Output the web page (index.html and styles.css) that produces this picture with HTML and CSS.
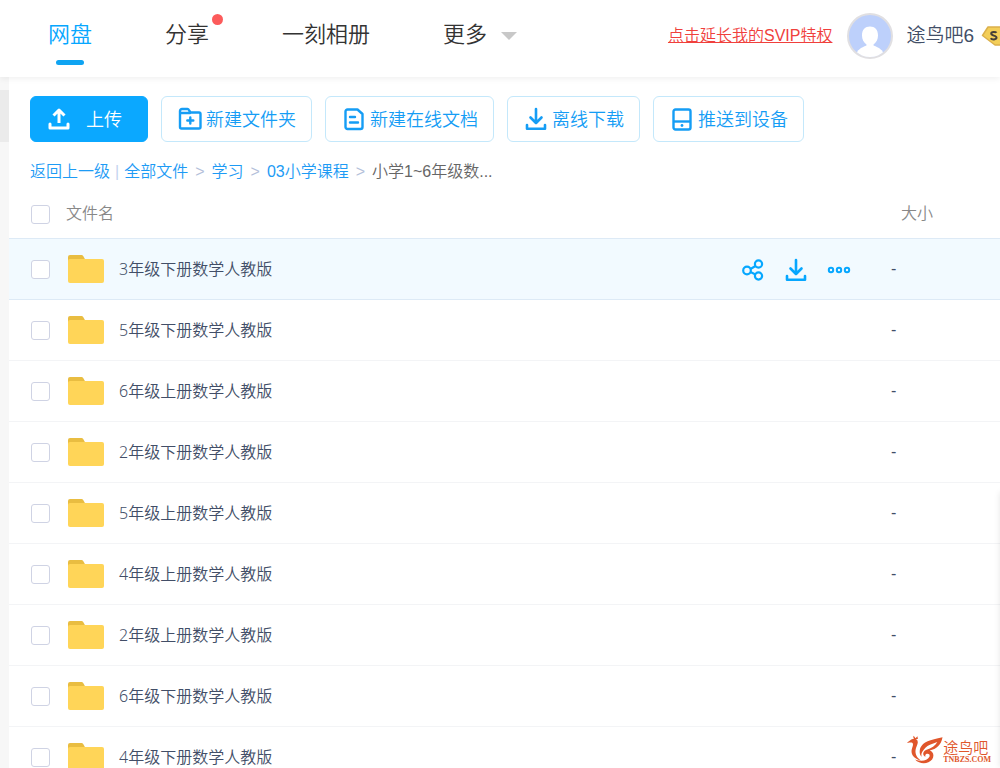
FILE: index.html
```html
<!DOCTYPE html>
<html lang="zh-CN">
<head>
<meta charset="utf-8">
<title>网盘</title>
<link rel="stylesheet" href="styles.css">
</head>
<body>
<svg class="sprite" aria-hidden="true">
  <symbol id="folder" viewBox="0 0 36 30">
    <path d="M0 12V3a2 2 0 0 1 2-2h11.500a2 2 0 0 1 1.700.9L17.500 6v6z" fill="#e9bd41"/>
    <path d="M0 6.500Q0 5 2 5h32a2 2 0 0 1 2 2v20a2 2 0 0 1-2 2H2a2 2 0 0 1-2-2z" fill="#ffd558"/>
  </symbol>
  <symbol id="download" viewBox="0 0 24 24">
    <path d="M12 2v14M6.500 10.500 12 16l5.500-5.500M3 18v3.700h18V18" fill="none" stroke="currentColor" stroke-width="2.600" stroke-linecap="round" stroke-linejoin="round"/>
  </symbol>
</svg>
<div class="app">
  <header class="header">
    <nav class="nav">
      <a class="nav-item active" href="#">网盘</a>
      <a class="nav-item" href="#">分享<span class="dot"></span></a>
      <a class="nav-item" href="#">一刻相册</a>
      <a class="nav-item more" href="#">更多<span class="caret"></span></a>
    </nav>
    <div class="user">
      <a class="svip" href="#">点击延长我的SVIP特权</a>
      <svg class="avatar" viewBox="0 0 46 46" aria-label="头像">
        <clipPath id="disc"><circle cx="23" cy="23" r="21"/></clipPath>
        <circle cx="23" cy="23" r="22" fill="#bdd0fb" stroke="#e0dfe2" stroke-width="2"/>
        <g clip-path="url(#disc)" fill="#fff">
          <path d="M15 22.500c0-6 3.200-9 8-9s8 3 8 9c0 4-1.700 7-4.500 9v2h-7v-2c-2.800-2-4.500-5-4.500-9z"/>
          <path d="M9 42c1-5 5-7.500 10.500-9.500h7C32 34.500 36 37 37 42v4H9z"/>
        </g>
      </svg>
      <span class="username">途鸟吧6</span>
      <svg class="badge" viewBox="0 0 19 24" aria-label="SVIP">
        <path d="M7 3h14v18h-7L1.500 11.500z" fill="#f3ce58" stroke="#dbb04b" stroke-width="1.500" stroke-linejoin="round"/>
        <path d="M15.500 8.800C14.800 7.700 10.200 7.200 10.200 9.600c0 2.500 5.300 1.500 5.300 4 0 2.400-4.800 2.200-5.800.7" fill="none" stroke="#463f38" stroke-width="2"/>
      </svg>
    </div>
  </header>
  <div class="body">
    <aside class="rail"><div class="rail-thumb"></div></aside>
    <main class="main">
      <div class="toolbar">
        <button class="btn primary" type="button">
          <svg class="icon" viewBox="0 0 26 26"><path d="M13 17V5M7.500 9.500 13 4l5.500 5.500" fill="none" stroke="currentColor" stroke-width="3" stroke-linejoin="round"/><path d="M4 18v4h18v-4" fill="none" stroke="currentColor" stroke-width="3" stroke-linecap="round" stroke-linejoin="round"/></svg>
          <span class="label">上传</span></button>
        <button class="btn" type="button">
          <svg class="icon" viewBox="0 0 26 26" fill="none" stroke="currentColor" stroke-width="2.400" stroke-linejoin="round" stroke-linecap="round"><path d="M3 21V5a2 2 0 0 1 2-2h5.500a1.500 1.500 0 0 1 1.300.800L13.500 6.500H22a1.500 1.500 0 0 1 1.500 1.500v13a1.500 1.500 0 0 1-1.500 1.500H4.500A1.500 1.500 0 0 1 3 21zM3 7h10M13.300 11.500v6M10.300 14.500h6"/></svg>
          <span class="label">新建文件夹</span></button>
        <button class="btn" type="button">
          <svg class="icon" viewBox="0 0 26 26" fill="none" stroke="currentColor" stroke-width="2.400" stroke-linejoin="round" stroke-linecap="round"><path d="M6.500 3.500h10L21.500 8v13a2 2 0 0 1-2 2h-13a2 2 0 0 1-2-2V5.500a2 2 0 0 1 2-2zM9 11h5M9 16.500h8"/></svg>
          <span class="label">新建在线文档</span></button>
        <button class="btn" type="button">
          <svg class="icon" viewBox="-1 -1 26 26"><use href="#download" width="24" height="24"/></svg>
          <span class="label">离线下载</span></button>
        <button class="btn" type="button">
          <svg class="icon" viewBox="0 0 26 26" fill="none" stroke="currentColor" stroke-width="2.400" stroke-linejoin="round"><rect x="4.500" y="3.500" width="17" height="20" rx="2"/><path d="M4.500 15.500h17"/><circle cx="13" cy="19.500" r="1.400" fill="currentColor" stroke="none"/></svg>
          <span class="label">推送到设备</span></button>
      </div>
      <nav class="crumbs" aria-label="路径">
        <a href="#">返回上一级</a><span class="bar">|</span><a href="#">全部文件</a><span class="sep">&gt;</span><a href="#">学习</a><span class="sep">&gt;</span><a href="#">03小学课程</a><span class="sep">&gt;</span><span>小学1~6年级数...</span>
      </nav>
      <table class="files">
        <thead>
          <tr><th class="c-check"><input class="check" type="checkbox" aria-label="全选"></th><th class="c-name">文件名</th><th class="c-size">大小</th></tr>
        </thead>
        <tbody>
          <tr class="hover">
            <td class="c-check"><input class="check" type="checkbox" aria-label="3年级下册数学人教版"></td>
            <td><div class="file"><svg class="folder"><use href="#folder"/></svg><a class="name" href="#">3年级下册数学人教版</a>
              <div class="actions">
                <button class="act" type="button" aria-label="分享"><svg viewBox="0 0 24 24" fill="none" stroke="currentColor" stroke-width="2.200"><circle cx="6" cy="12.500" r="3.800"/><circle cx="17.500" cy="6" r="3.600"/><circle cx="17.500" cy="18" r="3.600"/><path d="M9.500 11 14.500 8M9.500 14l5 2.500"/></svg></button>
                <button class="act" type="button" aria-label="下载"><svg><use href="#download"/></svg></button>
                <button class="act" type="button" aria-label="更多"><svg viewBox="0 0 24 24" fill="none" stroke="currentColor" stroke-width="2"><circle cx="4" cy="12" r="2.200"/><circle cx="12" cy="12" r="2.200"/><circle cx="20" cy="12" r="2.200"/></svg></button>
              </div></div></td>
            <td class="c-size">-</td>
          </tr>
          <tr><td class="c-check"><input class="check" type="checkbox" aria-label="5年级下册数学人教版"></td><td><div class="file"><svg class="folder"><use href="#folder"/></svg><a class="name" href="#">5年级下册数学人教版</a></div></td><td class="c-size">-</td></tr>
          <tr><td class="c-check"><input class="check" type="checkbox" aria-label="6年级上册数学人教版"></td><td><div class="file"><svg class="folder"><use href="#folder"/></svg><a class="name" href="#">6年级上册数学人教版</a></div></td><td class="c-size">-</td></tr>
          <tr><td class="c-check"><input class="check" type="checkbox" aria-label="2年级下册数学人教版"></td><td><div class="file"><svg class="folder"><use href="#folder"/></svg><a class="name" href="#">2年级下册数学人教版</a></div></td><td class="c-size">-</td></tr>
          <tr><td class="c-check"><input class="check" type="checkbox" aria-label="5年级上册数学人教版"></td><td><div class="file"><svg class="folder"><use href="#folder"/></svg><a class="name" href="#">5年级上册数学人教版</a></div></td><td class="c-size">-</td></tr>
          <tr><td class="c-check"><input class="check" type="checkbox" aria-label="4年级上册数学人教版"></td><td><div class="file"><svg class="folder"><use href="#folder"/></svg><a class="name" href="#">4年级上册数学人教版</a></div></td><td class="c-size">-</td></tr>
          <tr><td class="c-check"><input class="check" type="checkbox" aria-label="2年级上册数学人教版"></td><td><div class="file"><svg class="folder"><use href="#folder"/></svg><a class="name" href="#">2年级上册数学人教版</a></div></td><td class="c-size">-</td></tr>
          <tr><td class="c-check"><input class="check" type="checkbox" aria-label="6年级下册数学人教版"></td><td><div class="file"><svg class="folder"><use href="#folder"/></svg><a class="name" href="#">6年级下册数学人教版</a></div></td><td class="c-size">-</td></tr>
          <tr><td class="c-check"><input class="check" type="checkbox" aria-label="4年级下册数学人教版"></td><td><div class="file"><svg class="folder"><use href="#folder"/></svg><a class="name" href="#">4年级下册数学人教版</a></div></td><td class="c-size">-</td></tr>
        </tbody>
      </table>
    </main>
  </div>
  <div class="side-shadow"></div>
  <div class="brand">
    <svg class="brand-logo" viewBox="0 0 38 30" aria-hidden="true">
      <path d="M0 7c2-1 3-2 4.500-3C7 2.500 10 3 11 5c1.200 2.500-.5 5-1.500 8-1.500 5 0 9.500 5 13C7 24 3 19 5.500 12.500 7 9 6.500 7 4 7c-1.500 0-2.500.5-4 0z"/>
      <path d="M7.500 3.500C6.500 2 6.500 1 7 0l2 2.500L11 .5l.5 3z"/>
      <path d="M14 13C17 6 24 4.500 37.500 1.500 36 10 31 14 24 15.500c4 1.500 5 5.500 2.500 9.500-4 5-13 5.500-18 0 6 2.500 13 1.500 15-2.500 1.200-2.500-.5-4-2.500-3.500-1.500.5-2 2-1.500 3-3-1-3.500-5 .5-7 6-2 10-4.500 12-8.500-6 2.500-11 2.500-16 10.500-1 2-1 3.500-.5 5-2.500-2-2.500-6-1.500-9z"/>
    </svg>
    <div class="brand-text"><span class="brand-name">途鸟吧</span><span class="brand-url">TNBZS.COM</span></div>
  </div>
</div>
</body>
</html>
```

FILE: styles.css
```css
* { box-sizing: border-box; }

body {
  margin: 0;
  font: 350 16px/24px "Liberation Sans", "Noto Sans CJK SC", sans-serif;
  color: #424e67;
  background: #fff;
}

a { color: inherit; text-decoration: none; }
button { font: inherit; cursor: pointer; }
svg { display: block; flex: none; }
.sprite { position: absolute; width: 0; height: 0; }

.app {
  position: relative;
  display: flex;
  flex-direction: column;
  height: 100vh;
  overflow: hidden;
}

.header {
  position: relative;
  z-index: 1;
  flex: none;
  display: flex;
  justify-content: space-between;
  height: 77px;
  padding-left: 48px;
  background: #fff;
  box-shadow: 0 2px 6px rgba(0, 0, 0, .06);
}

.nav { display: flex; gap: 73px; }

.nav-item {
  position: relative;
  padding-top: 20px;
  font-size: 22px;
  line-height: 30px;
  color: #333;
  white-space: nowrap;
}

.nav-item.active { color: #06a7ff; }

.nav-item.active::after {
  content: "";
  display: block;
  width: 28px;
  height: 5px;
  margin: 10px auto 0;
  border-radius: 3px;
  background: #0fa4f2;
}

.dot {
  position: absolute;
  top: 14px;
  right: -14px;
  width: 11px;
  height: 11px;
  border-radius: 50%;
  background: #fc5b5b;
}

.caret {
  display: inline-block;
  margin-left: 14px;
  border: 8px solid transparent;
  border-top-color: #c8c8c8;
  border-bottom: 0;
  vertical-align: 2px;
}

.user {
  display: flex;
  align-items: center;
  padding-bottom: 6px;
  white-space: nowrap;
}

.svip { color: #f0403c; text-decoration: underline; }
.avatar { width: 46px; height: 46px; margin: 0 13px 0 15px; }
.username { font-size: 19px; }
.badge { width: 19px; height: 24px; margin-left: 7px; }

.body { flex: 1; display: flex; min-height: 0; }

.rail {
  flex: none;
  width: 9px;
  padding-top: 13px;
  background: #f7f7f7;
}

.rail-thumb { height: 52px; background: #ebebeb; }

.main { flex: 1; min-width: 0; }

.toolbar {
  display: flex;
  gap: 13px;
  padding: 19px 21px 0;
}

.btn {
  display: flex;
  align-items: center;
  gap: 3px;
  height: 46px;
  padding: 0 15px;
  border: 1px solid #c4e8fb;
  border-radius: 6px;
  background: #fff;
  color: #159df5;
  font-size: 18px;
  white-space: nowrap;
}

.btn.primary {
  gap: 14px;
  padding: 0 25px 0 15px;
  border-color: #0ba8ff;
  background: #0ba8ff;
  color: #fff;
}

.icon { width: 26px; height: 26px; }
.label { padding-top: 2px; }

.crumbs {
  padding: 18px 21px 0;
  color: #666;
  white-space: nowrap;
}

.crumbs a { color: #1d9bf5; }
.bar { margin: 0 5px; color: #c4d4ee; }
.sep { margin: 0 7px; color: #b4bfda; }

.files {
  width: 100%;
  border-collapse: separate;
  border-spacing: 0;
  table-layout: fixed;
}

.files th {
  height: 54px;
  padding: 6px 0 0;
  font-weight: 350;
  color: #888;
  text-align: left;
}

.files td {
  height: 61px;
  padding: 0;
  border-bottom: 1px solid #f3f4f6;
}

.files .c-check { width: 57px; padding-left: 22px; }
.files .c-size { width: 109px; }
.files th.c-size { padding-left: 10px; }

.files .hover td {
  height: 62px;
  border-top: 1px solid #ddeaf6;
  border-bottom-color: #ddeaf6;
  background: #f2faff;
}

.check {
  appearance: none;
  display: block;
  width: 19px;
  height: 19px;
  margin: 0;
  border: 1px solid #cfd3e4;
  border-radius: 3px;
  background: #fff;
}

.file { display: flex; align-items: center; padding-left: 2px; }
.folder { width: 36px; height: 30px; margin-right: 15px; }
.name { font-family: "Noto Sans", "Noto Sans CJK SC", sans-serif; }

.actions {
  display: flex;
  gap: 19px;
  margin-left: auto;
  padding: 2px 40px 0 0;
}

.act {
  padding: 0;
  border: 0;
  background: none;
  color: #06a7ff;
}

.act svg { width: 24px; height: 24px; }

.side-shadow {
  position: absolute;
  top: 492px;
  right: -8px;
  bottom: 0;
  width: 8px;
  box-shadow: 0 0 6px rgba(0, 0, 0, .1);
}

.brand {
  position: absolute;
  right: 9px;
  bottom: 3px;
  display: flex;
  align-items: center;
  color: #e0562b;
}

.brand-logo { width: 36px; height: 30px; fill: currentColor; }
.brand-text { display: flex; flex-direction: column; padding-top: 4px; }
.brand-name { font-size: 15px; line-height: 16px; }
.brand-url { font: bold 8px/8px "Liberation Serif", serif; }
```
